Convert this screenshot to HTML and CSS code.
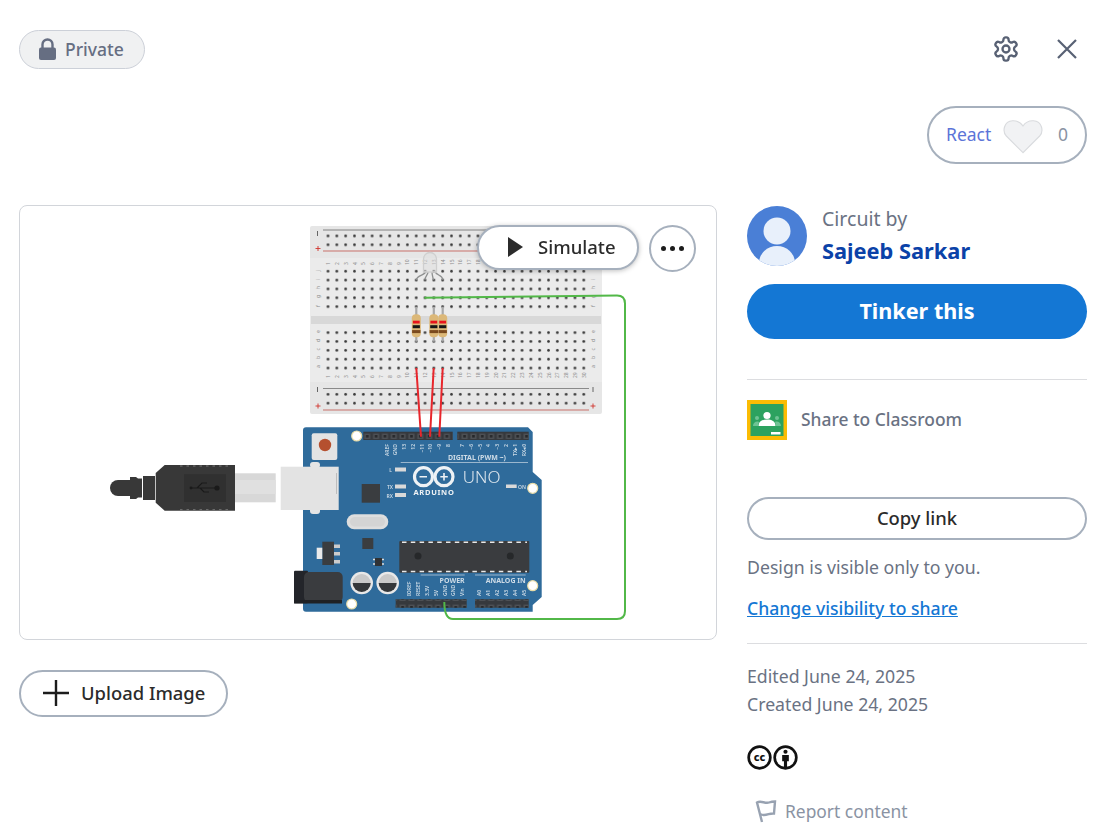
FILE: index.html
```html
<!DOCTYPE html>
<html lang="en">
  <head>
    <meta charset="UTF-8" />
    <meta name="viewport" content="width=device-width, initial-scale=1.0" />
    <title>Circuit design</title>
    <link rel="stylesheet" href="styles.css">
  </head>
  <body>
    <header class="top-bar">
      <span class="private-pill">
        <svg class="lock-icon" viewBox="0 0 17 22" width="17" height="22">
          <path d="M3.5 10V6.5a5 5 0 0 1 10 0V10" fill="none" stroke="#666e82" stroke-width="2.4" />
          <rect x="0" y="9.5" width="17" height="12.5" rx="2" fill="#666e82" />
        </svg>
        <span>Private</span>
      </span>
      <div class="top-actions">
        <svg class="gear-icon" viewBox="0 0 24 24" width="28" height="28" fill="none" stroke="#586174" stroke-width="2">
          <path d="M12.22 2h-.44a2 2 0 0 0-2 2v.18a2 2 0 0 1-1 1.73l-.43.25a2 2 0 0 1-2 0l-.15-.08a2 2 0 0 0-2.73.73l-.22.38a2 2 0 0 0 .73 2.73l.15.1a2 2 0 0 1 1 1.72v.51a2 2 0 0 1-1 1.74l-.15.09a2 2 0 0 0-.73 2.73l.22.38a2 2 0 0 0 2.73.73l.15-.08a2 2 0 0 1 2 0l.43.25a2 2 0 0 1 1 1.73V20a2 2 0 0 0 2 2h.44a2 2 0 0 0 2-2v-.18a2 2 0 0 1 1-1.73l.43-.25a2 2 0 0 1 2 0l.15.08a2 2 0 0 0 2.73-.73l.22-.39a2 2 0 0 0-.73-2.73l-.15-.08a2 2 0 0 1-1-1.74v-.5a2 2 0 0 1 1-1.74l.15-.09a2 2 0 0 0 .73-2.73l-.22-.38a2 2 0 0 0-2.73-.73l-.15.08a2 2 0 0 1-2 0l-.43-.25a2 2 0 0 1-1-1.73V4a2 2 0 0 0-2-2z" />
          <circle cx="12" cy="12" r="3" />
        </svg>
        <svg class="close-icon" viewBox="0 0 20 20" width="20" height="20" fill="none" stroke="#586174" stroke-width="2.2">
          <path d="M1 1l18 18M19 1L1 19" />
        </svg>
      </div>
    </header>

    <div class="react-row">
      <div class="react-pill">
        <span class="react-label">React</span>
        <svg class="heart-icon" viewBox="0 0 42 36" width="40" height="35">
          <path d="M21 35L3.5 17.5C-1 12.5 1 2 10 1.500C15 1.200 19 4 21 7C23 4 27 1.200 32 1.500C41 2 43 12.500 38.500 17.500Z" fill="#f1f2f4" stroke="#d9dbde" stroke-width="1.2" />
        </svg>
        <span class="react-count">0</span>
      </div>
    </div>

    <main class="content">
      <section class="left-col">
        <div class="canvas-card">
          <svg class="circuit" viewBox="19 205 698 435" width="698" height="435">
            <defs>
              <pattern id="holePat" width="8.82" height="8.85" patternUnits="userSpaceOnUse">
                <circle cx="4.41" cy="4.42" r="1.35" fill="#383838" />
              </pattern>
              <pattern id="pinPat" width="8.85" height="9" patternUnits="userSpaceOnUse">
                <rect x="1.4" y="1.6" width="6" height="5.4" fill="#4d5054" />
                <rect x="3.1" y="3" width="2.6" height="2.6" fill="#26282b" />
              </pattern>
              <rect id="holes5" width="264.6" height="44.2" fill="url(#holePat)" />
              <rect id="holes2" width="264.6" height="17.7" fill="url(#holePat)" />
              <g id="bbNums" class="bb-num">
                <text transform="translate(330,0) rotate(-90)">1</text>
                <text transform="translate(338.8,0) rotate(-90)">2</text>
                <text transform="translate(347.6,0) rotate(-90)">3</text>
                <text transform="translate(356.5,0) rotate(-90)">4</text>
                <text transform="translate(365.3,0) rotate(-90)">5</text>
                <text transform="translate(374.1,0) rotate(-90)">6</text>
                <text transform="translate(382.9,0) rotate(-90)">7</text>
                <text transform="translate(391.7,0) rotate(-90)">8</text>
                <text transform="translate(400.6,0) rotate(-90)">9</text>
                <text transform="translate(409.4,0) rotate(-90)">10</text>
                <text transform="translate(418.2,0) rotate(-90)">11</text>
                <text transform="translate(427,0) rotate(-90)">12</text>
                <text transform="translate(435.8,0) rotate(-90)">13</text>
                <text transform="translate(444.7,0) rotate(-90)">14</text>
                <text transform="translate(453.5,0) rotate(-90)">15</text>
                <text transform="translate(462.3,0) rotate(-90)">16</text>
                <text transform="translate(471.1,0) rotate(-90)">17</text>
                <text transform="translate(479.9,0) rotate(-90)">18</text>
                <text transform="translate(488.8,0) rotate(-90)">19</text>
                <text transform="translate(497.6,0) rotate(-90)">20</text>
                <text transform="translate(506.4,0) rotate(-90)">21</text>
                <text transform="translate(515.2,0) rotate(-90)">22</text>
                <text transform="translate(524,0) rotate(-90)">23</text>
                <text transform="translate(532.9,0) rotate(-90)">24</text>
                <text transform="translate(541.7,0) rotate(-90)">25</text>
                <text transform="translate(550.5,0) rotate(-90)">26</text>
                <text transform="translate(559.3,0) rotate(-90)">27</text>
                <text transform="translate(568.1,0) rotate(-90)">28</text>
                <text transform="translate(577,0) rotate(-90)">29</text>
                <text transform="translate(585.8,0) rotate(-90)">30</text>
              </g>
              <g id="resistor">
                <path d="M0 0V35" stroke="#a9a9a9" stroke-width="2.200" />
                <rect x="-4.500" y="7.500" width="9" height="23" rx="4" fill="#dcb878" />
                <rect x="-3.400" y="14" width="6.800" height="2.800" fill="#e8141c" />
                <rect x="-3.600" y="18.500" width="7.200" height="3" fill="#161616" />
                <rect x="-4.200" y="23.400" width="8.400" height="3" fill="#7a4a1e" />
              </g>
            </defs>

            <!-- breadboard -->
            <rect x="310" y="226" width="292" height="188" rx="2" fill="#e6e6e6" />
            <rect x="310" y="258" width="292" height="124" fill="#ebebeb" />
            <rect x="311" y="316" width="290" height="8" fill="#d8d8d8" />
            <path d="M323 230H601" stroke="#808080" stroke-width="1" />
            <path d="M323 251H601" stroke="#c8706a" stroke-width="1" />
            <path d="M323 388.500H589" stroke="#8a8a8a" stroke-width="1" />
            <path d="M323 410H589" stroke="#c8706a" stroke-width="1.200" />
            <use href="#holes2" x="323.600" y="231.600" />
            <use href="#holes5" x="323.600" y="266.900" />
            <use href="#holes5" x="323.600" y="328.300" />
            <use href="#holes2" x="323.600" y="390" />
            <use href="#bbNums" y="265" />
            <use href="#bbNums" y="378" />
            <g class="bb-letter">
              <text transform="translate(320,271.500) rotate(-90)">j</text>
              <text transform="translate(320,280.500) rotate(-90)">i</text>
              <text transform="translate(320,289) rotate(-90)">h</text>
              <text transform="translate(320,298) rotate(-90)">g</text>
              <text transform="translate(320,307) rotate(-90)">f</text>
              <text transform="translate(320,333) rotate(-90)">e</text>
              <text transform="translate(320,342) rotate(-90)">d</text>
              <text transform="translate(320,350.500) rotate(-90)">c</text>
              <text transform="translate(320,359) rotate(-90)">b</text>
              <text transform="translate(320,368) rotate(-90)">a</text>
              <text transform="translate(595,280.500) rotate(-90)">i</text>
              <text transform="translate(595,289) rotate(-90)">h</text>
              <text transform="translate(595,298) rotate(-90)">g</text>
              <text transform="translate(595,307) rotate(-90)">f</text>
              <text transform="translate(595,333) rotate(-90)">e</text>
              <text transform="translate(595,342) rotate(-90)">d</text>
              <text transform="translate(595,350.500) rotate(-90)">c</text>
              <text transform="translate(595,359) rotate(-90)">b</text>
              <text transform="translate(595,368) rotate(-90)">a</text>
            </g>
            <path d="M317.500 231V236M317.500 387V392M593 387V392" stroke="#444" stroke-width="0.800" />
            <path d="M315.500 248.500h5M318 246v5M315.500 406h5M318 403.500v5M590.500 406h5M593 403.500v5" stroke="#d0342c" stroke-width="0.900" />

            <!-- led -->
            <g fill="none" stroke="#8e9090" stroke-width="1.300">
              <path d="M426 271c-1 5-8 3-10 9M428 272c0 3-3 4-3 8M432 272c0 3 1 5 1.300 8M435 271c1 5 7 3 8 9" />
              <path d="M423.500 272v-13a6.500 6.500 0 0 1 13 0v13z" fill="#dedede" fill-opacity="0.5" stroke="#cfcfcf" />
            </g>

            <use href="#resistor" x="416.300" y="306.700" />
            <use href="#resistor" x="433.800" y="306.700" />
            <use href="#resistor" x="442.700" y="306.700" />

            <!-- usb cable -->
            <g>
              <path d="M130 480h-12a8 8 0 0 0 0 16h12z" fill="#383838" />
              <path d="M130 477h6l2 1.500h4v19h-4l-2 1.500h-6zM143 476h12v24h-12z" fill="#383838" />
              <path d="M155.700 473l9-8H235v45.700h-70.300l-9-8z" fill="#383838" />
              <path d="M180 466H232M180 509.700H232" stroke="#777" stroke-width="1" stroke-dasharray="2.500 4" />
              <rect x="184" y="474.300" width="42" height="27.700" fill="#303030" />
              <g fill="none" stroke="#1a1a1a" stroke-width="1.200">
                <path d="M191 488H216M197 488l5-5h5M200 488l4 4h5" />
              </g>
              <circle cx="217" cy="488" r="2.600" fill="#1a1a1a" />
              <circle cx="191" cy="488" r="1.400" fill="#1a1a1a" />
              <rect x="235" y="473.300" width="40.700" height="29" fill="#d8d8d8" />
              <rect x="235" y="480" width="40.700" height="14" fill="#e0e0e0" />
            </g>

            <!-- arduino board -->
            <path d="M306 427.300H528l4.700 4.700V472l9 8V597l-9 8v6.700H306a3 3 0 0 1-3-3V430.300a3 3 0 0 1 3-3z" fill="#2f6b9b" />
            <rect x="310" y="462" width="10" height="6" rx="3" fill="#e4e4e4" />
            <rect x="310" y="507" width="10" height="7" rx="3" fill="#e4e4e4" />
            <rect x="280.700" y="466.700" width="58" height="43.300" fill="#e3e3e3" />
            <path d="M336.500 473V494" stroke="#bdbdbd" stroke-width="1" />

            <rect x="311.700" y="433.300" width="25.600" height="26.700" rx="2" fill="#e3e3e3" />
            <circle cx="325" cy="445" r="6.200" fill="#b5502f" />

            <circle cx="356.700" cy="436" r="5" fill="#fff" stroke="#e8dca8" stroke-width="1.200" />
            <circle cx="532.700" cy="488.300" r="5" fill="#fff" stroke="#e8dca8" stroke-width="1.200" />
            <circle cx="351.700" cy="604" r="5" fill="#fff" stroke="#e8dca8" stroke-width="1.200" />
            <circle cx="532.700" cy="585.700" r="5" fill="#fff" stroke="#e8dca8" stroke-width="1.200" />

            <rect x="363.300" y="431.700" width="89.400" height="8.300" fill="#36393d" />
            <rect x="457.300" y="431.700" width="71.400" height="8.300" fill="#36393d" />
            <rect x="395.700" y="599.300" width="71" height="8.400" fill="#36393d" />
            <rect x="475" y="599.300" width="53.700" height="8.400" fill="#36393d" />
            <rect x="363.300" y="431.700" width="89.400" height="8.300" fill="url(#pinPat)" />
            <rect x="457.300" y="431.700" width="71.400" height="8.300" fill="url(#pinPat)" />
            <rect x="395.700" y="599.300" width="71" height="8.400" fill="url(#pinPat)" />
            <rect x="475" y="599.300" width="53.700" height="8.400" fill="url(#pinPat)" />

            <g class="pin-label">
              <text transform="translate(388.500,444) rotate(-90)">AREF</text>
              <text transform="translate(397,444) rotate(-90)">GND</text>
              <text transform="translate(406,444) rotate(-90)">13</text>
              <text transform="translate(414.700,444) rotate(-90)">12</text>
              <text transform="translate(423.700,444) rotate(-90)">~11</text>
              <text transform="translate(432,444) rotate(-90)">~10</text>
              <text transform="translate(441,444) rotate(-90)">~9</text>
              <text transform="translate(450,444) rotate(-90)">8</text>
              <text transform="translate(464,444) rotate(-90)">7</text>
              <text transform="translate(472.700,444) rotate(-90)">~6</text>
              <text transform="translate(481.700,444) rotate(-90)">~5</text>
              <text transform="translate(490,444) rotate(-90)">4</text>
              <text transform="translate(499,444) rotate(-90)">~3</text>
              <text transform="translate(508,444) rotate(-90)">2</text>
              <text transform="translate(517,444) rotate(-90)">TX▸1</text>
              <text transform="translate(526,444) rotate(-90)">RX◂0</text>
            </g>
            <g class="pin-label pin-label-bottom">
              <text transform="translate(411,596) rotate(-90)">IOREF</text>
              <text transform="translate(420,596) rotate(-90)">RESET</text>
              <text transform="translate(428.700,596) rotate(-90)">3.3V</text>
              <text transform="translate(437.700,596) rotate(-90)">5V</text>
              <text transform="translate(446.500,596) rotate(-90)">GND</text>
              <text transform="translate(455,596) rotate(-90)">GND</text>
              <text transform="translate(464,596) rotate(-90)">Vin</text>
              <text transform="translate(481.300,596) rotate(-90)">A0</text>
              <text transform="translate(490,596) rotate(-90)">A1</text>
              <text transform="translate(499,596) rotate(-90)">A2</text>
              <text transform="translate(508,596) rotate(-90)">A3</text>
              <text transform="translate(517,596) rotate(-90)">A4</text>
              <text transform="translate(525.700,596) rotate(-90)">A5</text>
            </g>

            <text class="board-label" x="506" y="460" text-anchor="end">DIGITAL (PWM ~)</text>
            <text class="board-label" x="464.700" y="583" text-anchor="end">POWER</text>
            <text class="board-label" x="525.700" y="583" text-anchor="end">ANALOG IN</text>
            <path d="M400.700 462.500H528M420.700 575H464.700M475 575H525.700" stroke="#a8c0d4" stroke-width="0.900" />

            <rect x="395" y="467.500" width="11" height="4" fill="#d9d9d9" />
            <rect x="395" y="484.500" width="11" height="4" fill="#d9d9d9" />
            <rect x="395" y="493" width="11" height="4" fill="#d9d9d9" />
            <rect x="506" y="484.500" width="10.700" height="3.500" fill="#d9d9d9" />
            <g class="led-label">
              <text x="392" y="472" text-anchor="end">L</text>
              <text x="393" y="489" text-anchor="end">TX</text>
              <text x="393" y="497.500" text-anchor="end">RX</text>
              <text x="518" y="488.500">ON</text>
            </g>

            <!-- arduino logo -->
            <g fill="none" stroke="#eef2f5" stroke-width="3.200">
              <circle cx="423.500" cy="476.700" r="9" />
              <circle cx="444" cy="476.700" r="9" />
            </g>
            <path d="M419.500 476.700h7.500M440.300 476.700h7.500M444 473v7.400" stroke="#eef2f5" stroke-width="1.600" />
            <text class="arduino-text" x="434" y="495" text-anchor="middle">ARDUINO</text>
            <text class="uno-text" x="481.700" y="483" text-anchor="middle">UNO</text>

            <rect x="361.700" y="484" width="18.300" height="18.700" fill="#3a3d40" />
            <rect x="362.300" y="538" width="11" height="11" fill="#3a3d40" />
            <rect x="346.700" y="514.300" width="41.600" height="15" rx="7.500" fill="#dedede" />
            <rect x="350" y="517" width="35" height="9.500" rx="4.700" fill="#d4d4d4" />

            <rect x="322.300" y="541.700" width="11.700" height="23.300" fill="#3a3d40" />
            <rect x="316.700" y="547.700" width="5.600" height="11.300" fill="#eaeaea" />
            <rect x="334" y="544.500" width="6" height="3.500" fill="#ccc" />
            <rect x="334" y="552" width="6" height="3.500" fill="#ccc" />
            <rect x="334" y="560" width="6" height="3.500" fill="#ccc" />

            <rect x="375" y="558" width="7" height="8" fill="#2f3235" />
            <path d="M373 559.500h2M373 564h2M382 559.500h2M382 564h2" stroke="#ddd" stroke-width="1.400" />

            <rect x="399.300" y="541" width="130" height="31.700" rx="1" fill="#3a3c3f" />
            <path d="M402 542.200H527M402 571.500H527" stroke="#e8e8e8" stroke-width="1.400" stroke-dasharray="4.500 4.300" />
            <circle cx="418" cy="556" r="3.500" fill="#26282a" />
            <circle cx="510.300" cy="556" r="3.500" fill="#26282a" />

            <g>
              <circle cx="361.700" cy="583" r="11.300" fill="#e8e8e8" />
              <circle cx="361.700" cy="583" r="9" fill="#c9c9c9" />
              <path d="M352.700 583a9 9 0 0 0 18 0z" fill="#34373a" />
              <circle cx="387.700" cy="583" r="11.300" fill="#e8e8e8" />
              <circle cx="387.700" cy="583" r="9" fill="#c9c9c9" />
              <path d="M378.700 583a9 9 0 0 0 18 0z" fill="#34373a" />
            </g>

            <rect x="294" y="570.700" width="14" height="32.600" rx="1" fill="#23252a" />
            <rect x="304" y="572" width="38.700" height="30" rx="5" fill="#3a3c3f" />
            <rect x="294" y="600" width="48" height="3.500" fill="#1f2124" />

            <!-- wires -->
            <path d="M416.300 368L421 436.700M433.700 368L430 436.700M442.700 368L439.300 436.700" fill="none" stroke="#e8262c" stroke-width="2" />
            <path d="M424.300 297.700L617 295.500Q625 295.500 625 303.500V611Q625 619 617 619H453Q444.300 619 444.300 602" fill="none" stroke="#52b848" stroke-width="2" />
          </svg>

          <button class="simulate-btn">
            <svg viewBox="0 0 15 20" width="15" height="20"><path d="M0 0L15 10L0 20Z" fill="#2b2b2b" /></svg>
            <span>Simulate</span>
          </button>
          <button class="more-btn">
            <span class="dot"></span><span class="dot"></span><span class="dot"></span>
          </button>
        </div>

        <button class="upload-btn">
          <svg viewBox="0 0 26 26" width="26" height="26"><path d="M13 0V26M0 13H26" stroke="#1c1c1c" stroke-width="2.400" /></svg>
          <span>Upload Image</span>
        </button>
      </section>

      <aside class="right-col">
        <div class="author">
          <svg class="avatar" viewBox="0 0 60 60" width="60" height="60">
            <defs><clipPath id="avatarClip"><circle cx="30" cy="30" r="30" /></clipPath></defs>
            <g clip-path="url(#avatarClip)">
              <rect width="60" height="60" fill="#4a7fd6" />
              <circle cx="30" cy="25" r="13.500" fill="#e8f0fb" />
              <ellipse cx="30" cy="57" rx="18" ry="17" fill="#e8f0fb" />
            </g>
          </svg>
          <div class="author-text">
            <span class="circuit-by">Circuit by</span>
            <a class="author-name">Sajeeb Sarkar</a>
          </div>
        </div>

        <button class="tinker-btn">Tinker this</button>

        <hr class="divider divider-first" />

        <div class="classroom">
          <svg viewBox="0 0 40 40" width="40" height="40">
            <rect width="40" height="40" fill="#fbbc04" />
            <rect x="3.500" y="4" width="33" height="32" fill="#2ca25f" />
            <circle cx="20" cy="15.500" r="3.600" fill="#fff" />
            <path d="M11.500 26c0-5 4-6.500 8.500-6.500s8.500 1.500 8.500 6.500z" fill="#fff" />
            <circle cx="10" cy="18" r="2" fill="#6fc394" />
            <circle cx="30" cy="18" r="2" fill="#6fc394" />
            <path d="M6 26c0-3 2-4.500 4.500-4.500l1.500.3-1 4.200zM34 26c0-3-2-4.500-4.500-4.500l-1.500.3 1 4.200z" fill="#6fc394" />
            <rect x="24" y="32" width="9.500" height="2.500" fill="#fff" />
          </svg>
          <span class="classroom-text">Share to Classroom</span>
        </div>

        <button class="copy-btn">Copy link</button>

        <p class="visibility-note">Design is visible only to you.</p>
        <a class="visibility-link">Change visibility to share</a>

        <hr class="divider divider-second" />

        <div class="dates">
          <div>Edited June 24, 2025</div>
          <div>Created June 24, 2025</div>
        </div>

        <div class="license">
          <svg viewBox="0 0 24 24" width="25" height="25">
            <circle cx="12" cy="12" r="10.400" fill="#fff" stroke="#111" stroke-width="2.600" />
            <text class="cc-text" x="12" y="15.400" text-anchor="middle">cc</text>
          </svg>
          <svg viewBox="0 0 24 24" width="25" height="25">
            <circle cx="12" cy="12" r="10.400" fill="#fff" stroke="#111" stroke-width="2.600" />
            <circle cx="12" cy="6.500" r="2" fill="#111" />
            <path d="M8.800 9.500h6.400v6h-1.700v5.500h-3v-5.500h-1.700z" fill="#111" />
          </svg>
        </div>

        <a class="report">
          <svg viewBox="0 0 22 24" width="22" height="24" fill="none" stroke="#98a2b1" stroke-width="2.400">
            <path d="M7 23L2 3.500C6 1 10 5 14 3.500c2-.7 4-1 6-1l-1 12c-4-.5-6 1.500-10 1.500-1.500 0-3-.5-4-1" />
          </svg>
          <span>Report content</span>
        </a>
      </aside>
    </main>
  </body>
</html>
```

FILE: styles.css
```css
* {
  box-sizing: border-box;
}

body {
  margin: 0;
  padding: 30px 25px 0 19px;
  background: #fff;
  font-family: "Noto Sans", sans-serif;
  color: #6a7283;
  overflow: hidden;
}

button {
  font-family: inherit;
  cursor: pointer;
}

a {
  cursor: pointer;
}

.top-bar {
  display: flex;
  justify-content: space-between;
  align-items: center;
  height: 39px;
}

.private-pill {
  display: flex;
  align-items: center;
  gap: 9px;
  width: 126px;
  height: 39px;
  padding: 0 0 2px 19px;
  background: #f0f1f2;
  border: 1px solid #ccd0d8;
  border-radius: 20px;
  font-size: 17.5px;
  font-weight: 500;
  color: #666e82;
}

.top-actions {
  display: flex;
  align-items: center;
  gap: 37px;
  margin-top: -2px;
  padding-right: 10px;
}

.react-row {
  display: flex;
  justify-content: flex-end;
  margin-top: 37px;
}

.react-pill {
  display: flex;
  align-items: center;
  width: 160px;
  height: 58px;
  padding: 0 0 2px 17px;
  border: 2px solid #a6b0bd;
  border-radius: 29px;
  font-size: 17.5px;
}

.react-label {
  color: #5b74d8;
  width: 57px;
}

.heart-icon {
  flex: none;
  margin-top: 4px;
}

.react-count {
  margin-left: 15px;
  color: #8a93a3;
}

.content {
  display: flex;
  gap: 30px;
  margin-top: 41px;
}

.left-col {
  width: 698px;
}

.canvas-card {
  position: relative;
  width: 698px;
  height: 435px;
  border: 1px solid #d2d5da;
  border-radius: 8px;
  overflow: hidden;
}

.circuit {
  display: block;
  margin: -1px;
  filter: blur(0.35px);
}

.simulate-btn {
  position: absolute;
  left: 457px;
  top: 19px;
  display: flex;
  align-items: center;
  gap: 15px;
  width: 162px;
  height: 45px;
  padding: 0 0 2px 29px;
  background: #fff;
  border: 2px solid #a6b0bd;
  border-radius: 23px;
  box-shadow: 0 1px 5px rgba(0, 0, 0, 0.25);
  font-size: 18.5px;
  font-weight: 500;
  color: #2b2b2b;
}

.more-btn {
  position: absolute;
  left: 629px;
  top: 19px;
  display: flex;
  align-items: center;
  justify-content: center;
  gap: 4px;
  width: 47px;
  height: 47px;
  padding: 0;
  background: #fff;
  border: 2px solid #a6b0bd;
  border-radius: 50%;
}

.dot {
  width: 5px;
  height: 5px;
  background: #1c1c1c;
  border-radius: 50%;
}

.upload-btn {
  display: flex;
  align-items: center;
  gap: 12px;
  width: 209px;
  height: 47px;
  margin-top: 30px;
  padding: 0 0 2px 22px;
  background: #fff;
  border: 2px solid #a6b0bd;
  border-radius: 24px;
  font-size: 18.4px;
  font-weight: 500;
  color: #2b2b2b;
}

.right-col {
  width: 340px;
  display: flex;
  flex-direction: column;
}

.author {
  display: flex;
  gap: 15px;
  height: 60px;
  margin-top: 1px;
}

.author-text {
  display: flex;
  flex-direction: column;
}

.circuit-by {
  font-size: 19.5px;
  line-height: 26px;
}

.author-name {
  margin-top: 4px;
  font-size: 21.8px;
  line-height: 30px;
  font-weight: 700;
  color: #0b42a8;
}

.tinker-btn {
  width: 340px;
  height: 55px;
  margin-top: 18px;
  padding: 0 0 2px;
  background: #1477d4;
  border: none;
  border-radius: 28px;
  color: #fff;
  font-size: 21.6px;
  font-weight: 700;
}

.divider {
  width: 100%;
  margin: 0;
  border: none;
  border-top: 1px solid #dcdde0;
}

.divider-first {
  margin-top: 40px;
}

.classroom {
  display: flex;
  align-items: center;
  gap: 14px;
  margin-top: 20px;
  font-size: 17.4px;
  font-weight: 500;
}

.classroom-text {
  padding-bottom: 2px;
}

.copy-btn {
  width: 340px;
  height: 43px;
  margin-top: 57px;
  padding: 0 0 2px;
  background: #fff;
  border: 2px solid #a6b0bd;
  border-radius: 22px;
  color: #2b2b2b;
  font-size: 18.4px;
  font-weight: 500;
}

.visibility-note {
  margin: 15px 0 0;
  font-size: 17.7px;
  line-height: 24px;
}

.visibility-link {
  margin-top: 17px;
  font-size: 17.6px;
  line-height: 24px;
  font-weight: 500;
  color: #1477d4;
  text-decoration: underline;
}

.divider-second {
  margin-top: 23px;
}

.dates {
  margin-top: 18px;
  font-size: 17.7px;
  line-height: 28px;
}

.license {
  display: flex;
  gap: 1px;
  margin-top: 27px;
}

.report {
  display: flex;
  align-items: center;
  gap: 8px;
  margin-top: 29px;
  padding-left: 8px;
  font-size: 17.4px;
  color: #8a93a3;
}

/* small print on the circuit drawing */
.bb-num text,
.bb-letter text {
  font-size: 5px;
  fill: #8a8a8a;
}

.pin-label text {
  font-size: 5px;
  font-weight: 600;
  fill: #cddbe6;
  text-anchor: end;
}

.pin-label-bottom text {
  text-anchor: start;
}

.board-label {
  font-size: 7px;
  font-weight: 700;
  fill: #cddbe6;
}

.led-label text {
  font-size: 5px;
  font-weight: 600;
  fill: #cddbe6;
}

.arduino-text {
  font-size: 7.5px;
  font-weight: 700;
  letter-spacing: 0.7px;
  fill: #eef2f5;
}

.uno-text {
  font-size: 17px;
  font-weight: 300;
  fill: #dfe8ef;
}

.cc-text {
  font-size: 10.5px;
  font-weight: 800;
  fill: #111;
}
```
